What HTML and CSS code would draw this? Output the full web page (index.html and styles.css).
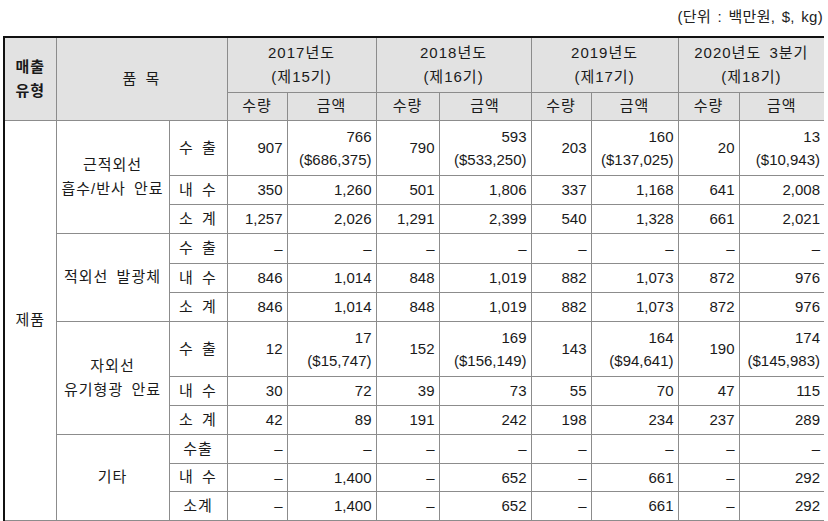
FILE: index.html
```html
<!DOCTYPE html>
<html lang="ko">
<head>
<meta charset="utf-8">
<link rel="stylesheet" href="styles.css">
</head>
<body>
<div class="page">
  <div class="unit">(단위 : 백만원, $, kg)</div>
  <table class="sales">
    <colgroup>
      <col class="c-type"><col class="c-item"><col class="c-kind">
      <col class="c-q1"><col class="c-a1">
      <col class="c-q2"><col class="c-a2">
      <col class="c-q3"><col class="c-a3">
      <col class="c-q4"><col class="c-a4">
    </colgroup>
    <thead>
      <tr class="h1">
        <th rowspan="2" class="first bold">매출<br>유형</th>
        <th rowspan="2" colspan="2">품 목</th>
        <th colspan="2">2017년도<br>(제15기)</th>
        <th colspan="2">2018년도<br>(제16기)</th>
        <th colspan="2">2019년도<br>(제17기)</th>
        <th colspan="2" class="last">2020년도 3분기<br>(제18기)</th>
      </tr>
      <tr class="h2">
        <th>수량</th><th>금액</th>
        <th>수량</th><th>금액</th>
        <th>수량</th><th>금액</th>
        <th>수량</th><th class="last">금액</th>
      </tr>
    </thead>
    <tbody>
      <tr class="tall">
        <td rowspan="12" class="first ctr">제품</td>
        <td rowspan="3" class="ctr">근적외선<br>흡수/반사 안료</td>
        <td class="ctr">수 출</td>
        <td>907</td><td>766<br>($686,375)</td>
        <td>790</td><td>593<br>($533,250)</td>
        <td>203</td><td>160<br>($137,025)</td>
        <td>20</td><td class="last">13<br>($10,943)</td>
      </tr>
      <tr class="r29">
        <td class="ctr">내 수</td>
        <td>350</td><td>1,260</td><td>501</td><td>1,806</td><td>337</td><td>1,168</td><td>641</td><td class="last">2,008</td>
      </tr>
      <tr class="r29">
        <td class="ctr">소 계</td>
        <td>1,257</td><td>2,026</td><td>1,291</td><td>2,399</td><td>540</td><td>1,328</td><td>661</td><td class="last">2,021</td>
      </tr>
      <tr class="r30">
        <td rowspan="3" class="ctr">적외선 발광체</td>
        <td class="ctr">수 출</td>
        <td>–</td><td>–</td><td>–</td><td>–</td><td>–</td><td>–</td><td>–</td><td class="last">–</td>
      </tr>
      <tr class="r29">
        <td class="ctr">내 수</td>
        <td>846</td><td>1,014</td><td>848</td><td>1,019</td><td>882</td><td>1,073</td><td>872</td><td class="last">976</td>
      </tr>
      <tr class="r29">
        <td class="ctr">소 계</td>
        <td>846</td><td>1,014</td><td>848</td><td>1,019</td><td>882</td><td>1,073</td><td>872</td><td class="last">976</td>
      </tr>
      <tr class="tall">
        <td rowspan="3" class="ctr">자외선<br>유기형광 안료</td>
        <td class="ctr">수 출</td>
        <td>12</td><td>17<br>($15,747)</td>
        <td>152</td><td>169<br>($156,149)</td>
        <td>143</td><td>164<br>($94,641)</td>
        <td>190</td><td class="last">174<br>($145,983)</td>
      </tr>
      <tr class="r29">
        <td class="ctr">내 수</td>
        <td>30</td><td>72</td><td>39</td><td>73</td><td>55</td><td>70</td><td>47</td><td class="last">115</td>
      </tr>
      <tr class="r29">
        <td class="ctr">소 계</td>
        <td>42</td><td>89</td><td>191</td><td>242</td><td>198</td><td>234</td><td>237</td><td class="last">289</td>
      </tr>
      <tr class="r29">
        <td rowspan="3" class="ctr">기타</td>
        <td class="ctr">수출</td>
        <td>–</td><td>–</td><td>–</td><td>–</td><td>–</td><td>–</td><td>–</td><td class="last">–</td>
      </tr>
      <tr class="r28">
        <td class="ctr">내 수</td>
        <td>–</td><td>1,400</td><td>–</td><td>652</td><td>–</td><td>661</td><td>–</td><td class="last">292</td>
      </tr>
      <tr class="r29">
        <td class="ctr">소계</td>
        <td>–</td><td>1,400</td><td>–</td><td>652</td><td>–</td><td>661</td><td>–</td><td class="last">292</td>
      </tr>
    </tbody>
  </table>
</div>
</body>
</html>
```

FILE: styles.css
```css
html, body {
  margin: 0;
  padding: 0;
  background: #ffffff;
}
body {
  font-family: "Liberation Sans", "Noto Sans CJK KR", sans-serif;
  font-size: 15px;
  color: #1a1a1a;
  word-spacing: 3px;
}
.page {
  width: 820px;
  padding: 0 0 0 3px;
}
.unit {
  height: 36px;
  box-sizing: border-box;
  padding-top: 6px;
  text-align: right;
  line-height: 22px;
  color: #222;
  word-spacing: 2px;
  letter-spacing: 0.3px;
}
.sales {
  border-collapse: collapse;
  table-layout: fixed;
  width: 820px;
  border-top: 2px solid #111;
}
.c-type { width: 52px; }
.c-item { width: 113px; }
.c-kind { width: 58px; }
.c-q1 { width: 60px; }
.c-a1 { width: 89px; }
.c-q2 { width: 63px; }
.c-a2 { width: 92px; }
.c-q3 { width: 60px; }
.c-a3 { width: 87px; }
.c-q4 { width: 61px; }
.c-a4 { width: 85px; }

.sales th,
.sales td {
  border: 1px solid #8c8c8c;
  padding: 0 4px;
  line-height: 23px;
  vertical-align: middle;
  white-space: nowrap;
}
.sales th {
  background: #e2e2e2;
  font-weight: 400;
  text-align: center;
  line-height: 24px;
  letter-spacing: 1px;
  padding: 0 2px;
}
.sales th.bold {
  font-weight: 700;
}
.sales td {
  text-align: right;
}
.sales td.ctr {
  text-align: center;
  line-height: 24px;
  padding: 0 1px;
  letter-spacing: 1px;
}
.sales .first {
  border-left: 2px solid #111;
}
.sales .last {
  border-right: none;
}
.h1 { height: 55px; }
.h2 { height: 28px; }
.tall { height: 55px; }
.r30 { height: 30px; }
.r29 { height: 29px; }
.r28 { height: 28px; }
```
